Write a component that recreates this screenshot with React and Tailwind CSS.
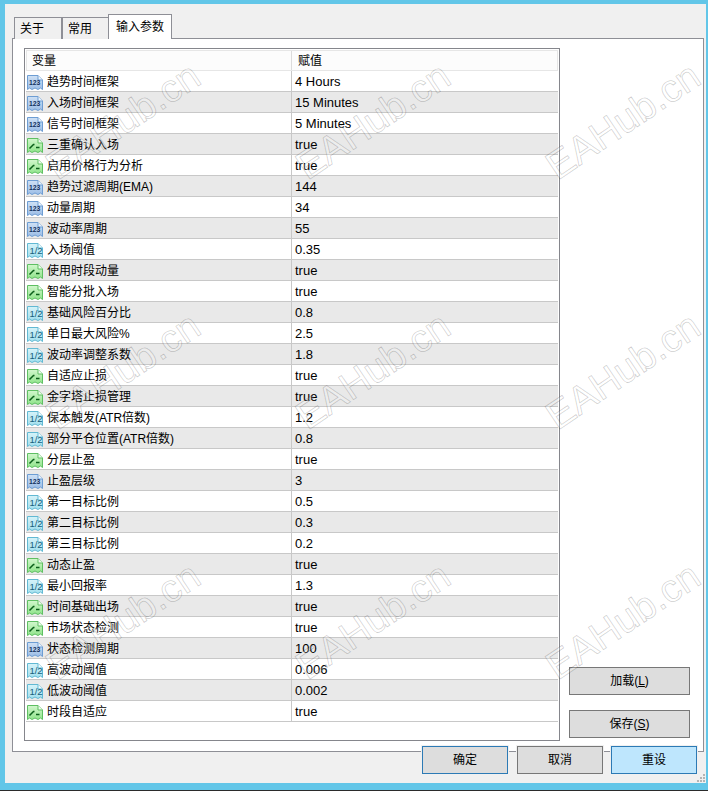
const rows = [
  ["n", "趋势时间框架", "4 Hours"], ["n", "入场时间框架", "15 Minutes"], ["n", "信号时间框架", "5 Minutes"],
  ["b", "三重确认入场", "true"], ["b", "启用价格行为分析", "true"], ["n", "趋势过滤周期(EMA)", "144"],
  ["n", "动量周期", "34"], ["n", "波动率周期", "55"], ["f", "入场阈值", "0.35"],
  ["b", "使用时段动量", "true"], ["b", "智能分批入场", "true"], ["f", "基础风险百分比", "0.8"],
  ["f", "单日最大风险%", "2.5"], ["f", "波动率调整系数", "1.8"], ["b", "自适应止损", "true"],
  ["b", "金字塔止损管理", "true"], ["f", "保本触发(ATR倍数)", "1.2"], ["f", "部分平仓位置(ATR倍数)", "0.8"],
  ["b", "分层止盈", "true"], ["n", "止盈层级", "3"], ["f", "第一目标比例", "0.5"],
  ["f", "第二目标比例", "0.3"], ["f", "第三目标比例", "0.2"], ["b", "动态止盈", "true"],
  ["f", "最小回报率", "1.3"], ["b", "时间基础出场", "true"], ["b", "市场状态检测", "true"],
  ["n", "状态检测周期", "100"], ["f", "高波动阈值", "0.006"], ["f", "低波动阈值", "0.002"],
  ["b", "时段自适应", "true"],
];

const shape = "M1.5 1.5H12L16.5 6V15.5L14.5 14L12 15.5L9 14L6 15.5L3.5 14L1.5 15.5Z";

function TypeIcon({ type }) {
  const c = {
    n: ["#cfe1f5", "#9cbde6", "#6d9dd3", "#eef5fc"],
    b: ["#d2f7cd", "#90e48b", "#5fbf63", "#f0fdee"],
    f: ["#d6f3f9", "#a3e0ee", "#62b9d3", "#f2fcfe"],
  }[type];
  const id = `grad-${type}`;
  return (
    <svg width="18" height="17" viewBox="0 0 18 17" className="shrink-0">
      <defs>
        <linearGradient id={id} x1="0" y1="0" x2="0" y2="1">
          <stop offset="0" stopColor={c[0]} />
          <stop offset="1" stopColor={c[1]} />
        </linearGradient>
      </defs>
      <path d={shape} fill={`url(#${id})`} stroke={c[2]} />
      <path d="M12 1.5V6H16.5" fill={c[3]} stroke={c[2]} />
      {type === "n" && (
        <text x="3" y="11.4" fontSize="6.8" fontWeight="700" fontFamily="Liberation Sans, sans-serif" fill="#14325e">123</text>
      )}
      {type === "f" && (
        <text x="3.4" y="11.8" fontSize="9.5" fontFamily="Liberation Sans, sans-serif" fill="#175f7c">1/2</text>
      )}
      {type === "b" && <path d="M3.5 11.5L7.5 7.5H8.5M10 10.5H13.5" fill="none" stroke="#0b5f1a" strokeWidth="1.5" />}
    </svg>
  );
}

function Watermark({ className }) {
  return (
    <div className={`absolute origin-left -rotate-[34deg] text-[39px] leading-none text-white/20 pointer-events-none whitespace-nowrap [-webkit-text-stroke:0.8px_rgba(0,0,0,0.2)] ${className}`}>
      EAHub.cn
    </div>
  );
}

function Btn({ children, className = "" }) {
  return (
    <button className={`h-[28px] flex items-center justify-center border text-[12px] text-black ${className}`}>
      {children}
    </button>
  );
}

export default function App() {
  return (
    <div className="relative w-[708px] h-[791px] overflow-hidden bg-[#62c6e8] pt-[4px] pl-[5px] border-b border-[#2b2b2b] font-['Liberation_Sans','Noto_Sans_CJK_SC',sans-serif] text-[12px] text-black">
      <div className="w-[701px] h-[779px] bg-[#f0f0f0] flex flex-col">
        <div className="flex items-end pl-[9px] pt-[10px] h-[34px] relative z-10">
          <div className="w-[48px] h-[22px] -mb-px flex items-center pl-[5px] bg-[#f0f0f0] border border-b-0 border-[#8e8f96]">关于</div>
          <div className="w-[47px] h-[22px] -mb-px flex items-center pl-[5px] bg-[#f0f0f0] border border-b-0 border-[#8e8f96]">常用</div>
          <div className="w-[64px] h-[25px] -mb-px -ml-px flex items-center pl-[7px] bg-white border border-b-0 border-[#8e8f96]">输入参数</div>
        </div>
        <div className="ml-[7px] w-[692px] h-[714px] bg-white border border-[#8e8f96] flex pl-[11px] pt-[9px] pb-[13px]">
          <div className="w-[536px] h-[693px] border border-[#85868c] p-px shrink-0">
            <div className="flex h-[21px] bg-[#fcfcfc] border border-[#e6e6e6]">
              <div className="w-[265px] pl-[5px] flex items-center border-r border-[#dcdcdc]">变量</div>
              <div className="pl-[6px] flex items-center">赋值</div>
            </div>
            {rows.map(([type, name, value], i) => (
              <div key={i} className={`flex h-[21px] border-b border-[#c8c8c8] ${i % 2 ? "bg-[#e9e9e9]" : "bg-white"}`}>
                <div className="w-[266px] flex items-center gap-[3px] border-r border-[#c8c8c8] pt-[2px]">
                  <TypeIcon type={type} />
                  <span>{name}</span>
                </div>
                <div className="pl-[3px] pt-[2px] flex items-center text-[13px]">{value}</div>
              </div>
            ))}
          </div>
          <div className="ml-[9px] w-[121px] flex flex-col justify-end gap-[15px]">
            <Btn className="bg-[#dddddd] border-[#777777]">加载(<u>L</u>)</Btn>
            <Btn className="bg-[#dddddd] border-[#777777]">保存(<u>S</u>)</Btn>
          </div>
        </div>
        <div className="relative z-10 -mt-[6px] pl-[417px] flex gap-[9px]">
          <Btn className="w-[86px] bg-[#dddddd] border-[#2c7ab5] ring-1 ring-[#f0f0f0]">确定</Btn>
          <Btn className="w-[86px] bg-[#dddddd] border-[#777777] ring-1 ring-[#f0f0f0]">取消</Btn>
          <Btn className="w-[86px] -ml-px bg-[#bee6fd] border-[#2c7ab5] ring-1 ring-[#f0f0f0]">重设</Btn>
        </div>
      </div>
      <svg width="10" height="10" viewBox="0 0 10 10" className="absolute left-[696px] top-[773px]">
        <g fill="#b4b4b4">
          <rect x="7" y="1" width="2" height="2" /><rect x="4" y="4" width="2" height="2" /><rect x="7" y="4" width="2" height="2" />
          <rect x="1" y="7" width="2" height="2" /><rect x="4" y="7" width="2" height="2" /><rect x="7" y="7" width="2" height="2" />
        </g>
      </svg>
      <Watermark className="left-[50px] top-[150px]" />
      <Watermark className="left-[300px] top-[150px]" />
      <Watermark className="left-[550px] top-[150px]" />
      <Watermark className="left-[50px] top-[400px]" />
      <Watermark className="left-[300px] top-[400px]" />
      <Watermark className="left-[550px] top-[400px]" />
      <Watermark className="left-[50px] top-[650px]" />
      <Watermark className="left-[300px] top-[650px]" />
      <Watermark className="left-[550px] top-[650px]" />
    </div>
  );
}
